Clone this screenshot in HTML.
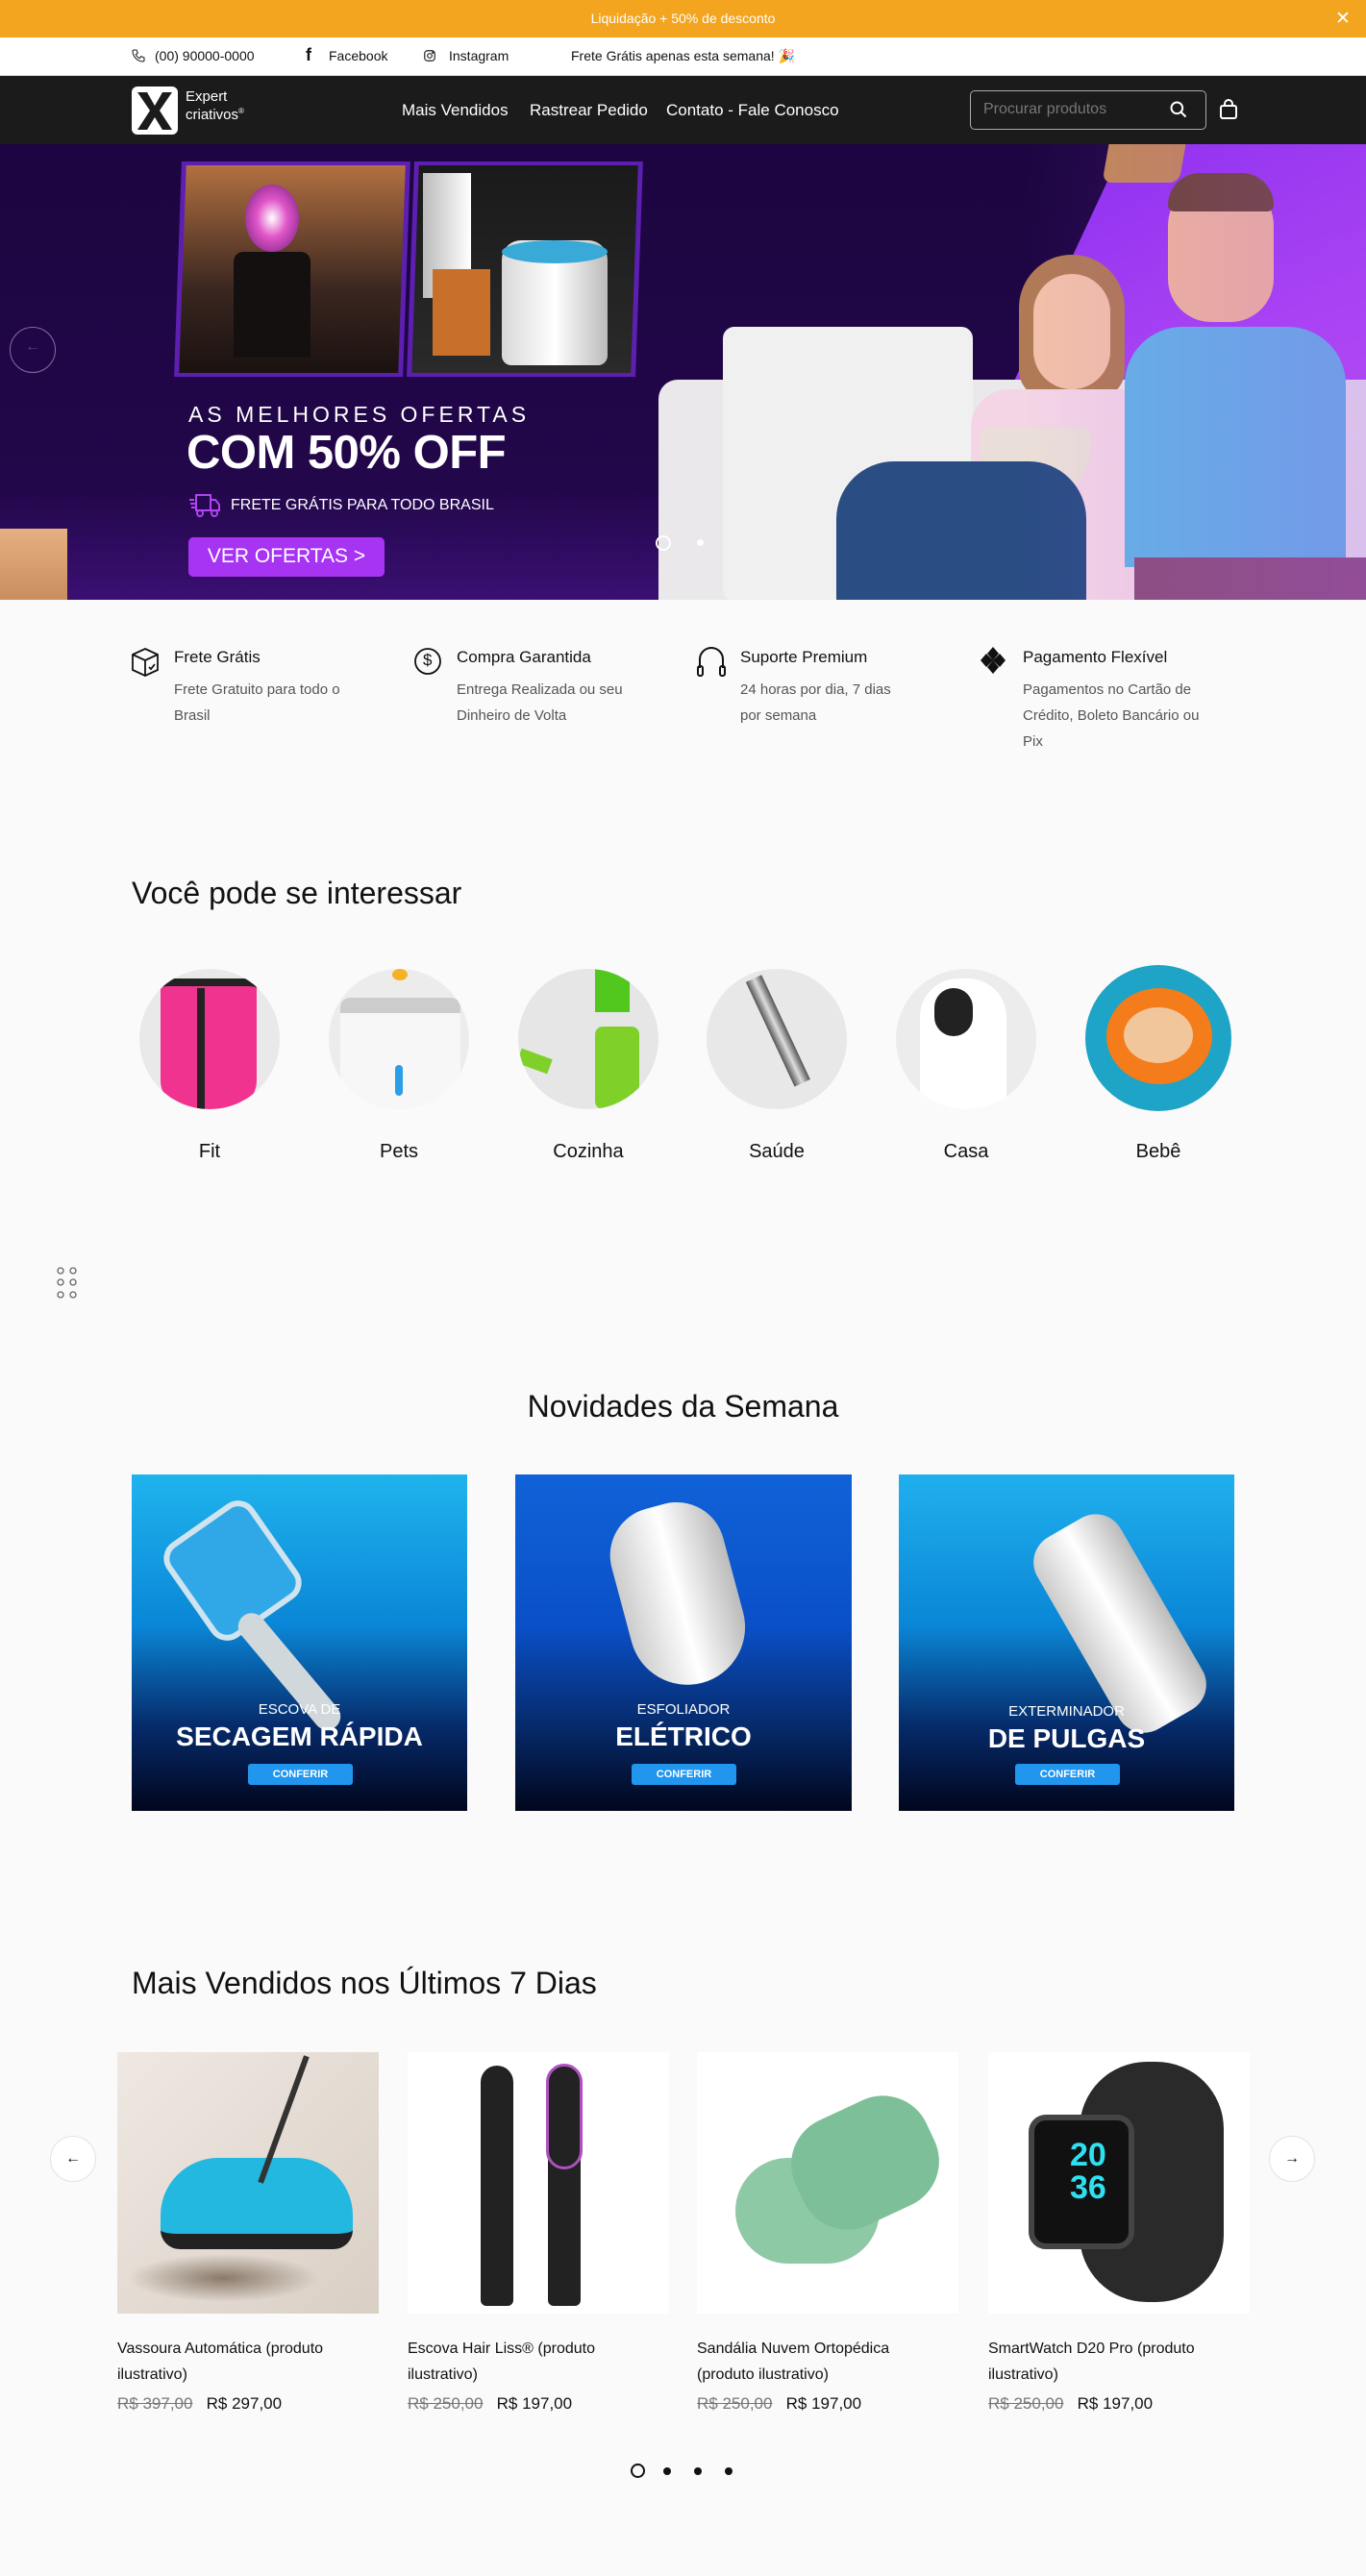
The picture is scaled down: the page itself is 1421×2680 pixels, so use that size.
<!DOCTYPE html>
<html><head><meta charset="utf-8">
<style>
*{margin:0;padding:0;box-sizing:border-box}
body{width:1421px;height:2680px;background:#fafafa;font-family:"Liberation Sans",sans-serif;position:relative;overflow:hidden;color:#111}
.a{position:absolute}
.t{white-space:nowrap}
</style></head><body>
<!-- promo bar -->
<div class="a" style="left:0;top:0;width:1421px;height:39px;background:#f3a51f"></div>
<div class="a t" style="left:0;top:11px;width:1421px;text-align:center;color:#fff;font-size:14px">Liquidação + 50% de desconto</div>
<div class="a t" style="left:1389px;top:8px;color:#fff;font-size:19px">✕</div>
<!-- top bar -->
<div class="a" style="left:0;top:39px;width:1421px;height:40px;background:#fff;border-bottom:1px solid #ddd"></div>
<svg class="a" style="left:136px;top:50px" width="16" height="16" viewBox="0 0 24 24" fill="none" stroke="#222" stroke-width="1.6"><path d="M5 3h4l2 5-3 2a12 12 0 0 0 6 6l2-3 5 2v4a2 2 0 0 1-2 2A17 17 0 0 1 3 5a2 2 0 0 1 2-2z"/></svg>
<div class="a t" style="left:161px;top:50px;font-size:14px">(00) 90000-0000</div>
<div class="a t" style="left:318px;top:47px;font-size:18px;font-weight:bold">f</div>
<div class="a t" style="left:342px;top:50px;font-size:14px">Facebook</div>
<svg class="a" style="left:440px;top:51px" width="14" height="14" viewBox="0 0 24 24" fill="none" stroke="#222" stroke-width="2"><rect x="3" y="3" width="18" height="18" rx="5"/><circle cx="12" cy="12" r="4"/><circle cx="17.5" cy="6.5" r="1" fill="#222"/></svg>
<div class="a t" style="left:467px;top:50px;font-size:14px">Instagram</div>
<div class="a t" style="left:594px;top:50px;font-size:14px">Frete Grátis apenas esta semana! <span style="color:#e6a">🎉</span></div>
<!-- nav -->
<div class="a" style="left:0;top:79px;width:1421px;height:71px;background:#1b1b1b"></div>
<div class="a" style="left:137px;top:90px;width:48px;height:50px;background:#fff;border-radius:6px"></div>
<svg class="a" style="left:137px;top:90px" width="48" height="50" viewBox="0 0 48 50"><path d="M6 6h10l8 14 8-14h10L29 25l13 20H32l-8-13-8 13H6l13-20z" fill="#1b1b1b"/></svg>
<div class="a" style="left:193px;top:93px;color:#fff;font-size:15px;line-height:15px">Expert<br>criativos<sup style="font-size:8px">®</sup></div>
<div class="a t" style="left:418px;top:105px;color:#fff;font-size:17px">Mais Vendidos</div>
<div class="a t" style="left:551px;top:105px;color:#fff;font-size:17px">Rastrear Pedido</div>
<div class="a t" style="left:693px;top:105px;color:#fff;font-size:17px">Contato - Fale Conosco</div>
<div class="a" style="left:1009px;top:94px;width:246px;height:41px;border:1px solid #aaa;border-radius:5px"></div>
<div class="a t" style="left:1023px;top:105px;color:#777;font-size:16px">Procurar produtos</div>
<svg class="a" style="left:1216px;top:104px" width="20" height="20" viewBox="0 0 24 24" fill="none" stroke="#fff" stroke-width="2.4"><circle cx="10" cy="10" r="7"/><path d="M15 15l6 6"/></svg>
<svg class="a" style="left:1268px;top:103px" width="20" height="22" viewBox="0 0 20 22" fill="none" stroke="#fff" stroke-width="2"><rect x="2" y="7" width="16" height="13" rx="2"/><path d="M6 7V5a4 4 0 0 1 8 0v2"/></svg>
<!-- hero -->
<div class="a" style="left:0;top:150px;width:1421px;height:474px;background:linear-gradient(180deg,#1c0540 0%,#22074a 75%,#3a0f72 100%);overflow:hidden">
  <div class="a" style="left:1030px;top:0;width:400px;height:474px;background:linear-gradient(160deg,#8a2ef0,#b046f5 60%,#9b3be0);clip-path:polygon(140px 0,400px 0,400px 474px,0 474px,0 300px)"></div>
  <div class="a" style="left:1150px;top:0;width:80px;height:40px;background:#c28a55;border-radius:0 0 10px 10px;transform:skewX(-10deg)"></div>
  <div class="a" style="left:0;top:400px;width:70px;height:74px;background:linear-gradient(#e6b080,#c98d60)"></div>
  <!-- couch -->
  <div class="a" style="left:685px;top:245px;width:736px;height:230px;background:#eae8ea;border-radius:20px 0 0 0"></div>
  <div class="a" style="left:752px;top:190px;width:260px;height:285px;background:#f1f0f1;border-radius:12px"></div>
  <!-- woman -->
  <div class="a" style="left:1060px;top:115px;width:110px;height:150px;background:#b07a55;border-radius:55px 55px 30px 30px"></div>
  <div class="a" style="left:1075px;top:135px;width:80px;height:120px;background:#f2c1a8;border-radius:40px"></div>
  <div class="a" style="left:1010px;top:255px;width:210px;height:219px;background:#f3d5e6;border-radius:40px 40px 0 0"></div>
  <div class="a" style="left:1020px;top:295px;width:115px;height:75px;background:#eadfd8;border-radius:10px 10px 55px 55px"></div>
  <div class="a" style="left:870px;top:330px;width:260px;height:145px;background:#2a4d84;border-radius:60px 60px 0 0"></div>
  <!-- man -->
  <div class="a" style="left:1215px;top:35px;width:110px;height:150px;background:#f0b899;border-radius:50px 50px 45px 45px"></div>
  <div class="a" style="left:1215px;top:30px;width:110px;height:40px;background:#6a4632;border-radius:50px 50px 10px 10px"></div>
  <div class="a" style="left:1170px;top:190px;width:230px;height:250px;background:#62b4e6;border-radius:60px 60px 0 0"></div>
  <div class="a" style="left:1180px;top:430px;width:241px;height:44px;background:#8a4f7a"></div>
  <div class="a" style="left:0;top:0;width:1421px;height:474px;background:linear-gradient(90deg,transparent 75%,rgba(170,70,240,.25))"></div>
  <!-- thumbnails -->
  <div class="a" style="left:185px;top:18px;width:238px;height:224px;background:#5d1fb0;transform:skewX(-2deg)"></div>
  <div class="a" style="left:190px;top:22px;width:228px;height:216px;background:linear-gradient(180deg,#b27040,#3a2620 60%,#1a1210);transform:skewX(-2deg)"></div>
  <div class="a" style="left:255px;top:42px;width:56px;height:70px;border-radius:50%;background:radial-gradient(#fff,#e055c8 40%,#6a1a7a)"></div>
  <div class="a" style="left:243px;top:112px;width:80px;height:110px;background:#151010;border-radius:10px 10px 0 0"></div>
  <div class="a" style="left:427px;top:18px;width:238px;height:224px;background:#5d1fb0;transform:skewX(-2deg)"></div>
  <div class="a" style="left:432px;top:22px;width:228px;height:216px;background:linear-gradient(180deg,#1a1a1a,#2a2a2a);transform:skewX(-2deg)"></div>
  <div class="a" style="left:522px;top:100px;width:110px;height:130px;background:linear-gradient(90deg,#d8d8d8,#fff,#bbb);border-radius:20px 20px 10px 10px"></div>
  <div class="a" style="left:522px;top:100px;width:110px;height:24px;background:#39a9d8;border-radius:50%"></div>
  <div class="a" style="left:440px;top:30px;width:50px;height:130px;background:linear-gradient(90deg,#bbb,#fff)"></div>
  <div class="a" style="left:450px;top:130px;width:60px;height:90px;background:#c8702a"></div>
  <!-- left arrow -->
  <div class="a" style="left:10px;top:190px;width:48px;height:48px;border:1px solid #8a6aa0;border-radius:50%"></div>
  <div class="a t" style="left:26px;top:202px;color:#5a3d80;font-size:16px">←</div>
  <!-- text -->
  <div class="a t" style="left:196px;top:268px;color:#fff;font-size:23px;letter-spacing:4px">AS MELHORES OFERTAS</div>
  <div class="a t" style="left:194px;top:293px;color:#fff;font-size:49px;font-weight:bold;letter-spacing:-0.5px">COM 50% OFF</div>
  <svg class="a" style="left:196px;top:362px" width="34" height="28" viewBox="0 0 34 28" fill="none" stroke="#b044f0" stroke-width="2"><rect x="8" y="3" width="15" height="16"/><path d="M23 8h5l4 5v6h-9z"/><circle cx="12" cy="22" r="3"/><circle cx="27" cy="22" r="3"/><path d="M1 8h5M2 12h5M3 16h4"/></svg>
  <div class="a t" style="left:240px;top:367px;color:#fff;font-size:16px">FRETE GRÁTIS PARA TODO BRASIL</div>
  <div class="a" style="left:196px;top:409px;width:204px;height:41px;background:#a634f2;border-radius:5px"></div>
  <div class="a t" style="left:196px;top:417px;width:204px;text-align:center;color:#fff;font-size:21px">VER OFERTAS &gt;</div>
  <div class="a" style="left:682px;top:407px;width:16px;height:16px;border:2px solid #fff;border-radius:50%"></div>
  <div class="a" style="left:725px;top:411px;width:7px;height:7px;background:#fff;border-radius:50%"></div>
</div>
<!-- features -->
<svg class="a" style="left:136px;top:673px" width="30" height="32" viewBox="0 0 30 32" fill="none" stroke="#111" stroke-width="1.8"><path d="M15 2L28 8v16l-13 6-13-6V8z"/><path d="M2 8l13 6 13-6M15 14v16"/><path d="M19 21l2 2 4-5"/></svg>
<div class="a t" style="left:181px;top:674px;font-size:17px">Frete Grátis</div>
<div class="a" style="left:181px;top:704px;font-size:15px;color:#555;line-height:27px;width:205px">Frete Gratuito para todo o Brasil</div>
<svg class="a" style="left:430px;top:673px" width="30" height="30" viewBox="0 0 30 30" fill="none" stroke="#111" stroke-width="1.8"><circle cx="15" cy="15" r="13"/></svg>
<div class="a t" style="left:440px;top:677px;font-size:17px">$</div>
<div class="a t" style="left:475px;top:674px;font-size:17px">Compra Garantida</div>
<div class="a" style="left:475px;top:704px;font-size:15px;color:#555;line-height:27px;width:205px">Entrega Realizada ou seu Dinheiro de Volta</div>
<svg class="a" style="left:724px;top:671px" width="32" height="34" viewBox="0 0 32 34" fill="none" stroke="#111" stroke-width="2"><path d="M4 24V15a12 12 0 0 1 24 0v9"/><rect x="2" y="22" width="5" height="10" rx="2"/><rect x="25" y="22" width="5" height="10" rx="2"/></svg>
<div class="a t" style="left:770px;top:674px;font-size:17px">Suporte Premium</div>
<div class="a" style="left:770px;top:704px;font-size:15px;color:#555;line-height:27px;width:175px">24 horas por dia, 7 dias por semana</div>
<svg class="a" style="left:1020px;top:673px" width="26" height="28" viewBox="0 0 26 28" fill="#111"><path d="M13 0l6 7-6 7-6-7zM6 7l7 7-7 7-6-7zM20 7l6 7-6 7-7-7zM13 14l6 7-6 7-6-7z"/></svg>
<div class="a t" style="left:1064px;top:674px;font-size:17px">Pagamento Flexível</div>
<div class="a" style="left:1064px;top:704px;font-size:15px;color:#555;line-height:27px;width:200px">Pagamentos no Cartão de Crédito, Boleto Bancário ou Pix</div>
<!-- interessar -->
<div class="a t" style="left:137px;top:911px;font-size:32px">Você pode se interessar</div>
<div class="a" style="left:145px;top:1008px;width:146px;height:146px;border-radius:50%;background:#e9e9e9;overflow:hidden"><div class="a" style="left:22px;top:10px;width:100px;height:136px;background:#f0338f;border-radius:10px 10px 30px 30px;border-top:8px solid #222"></div><div class="a" style="left:60px;top:20px;width:8px;height:126px;background:#222"></div></div>
<div class="a" style="left:342px;top:1008px;width:146px;height:146px;border-radius:50%;background:#ececec;overflow:hidden"><div class="a" style="left:12px;top:30px;width:125px;height:116px;background:#f7f7f7;border-radius:10px 10px 40px 40px;border-top:16px solid #ccc"></div><div class="a" style="left:69px;top:100px;width:8px;height:32px;background:#2b9ee8;border-radius:4px"></div><div class="a" style="left:66px;top:0;width:16px;height:12px;background:#f5b324;border-radius:50%"></div></div>
<div class="a" style="left:539px;top:1008px;width:146px;height:146px;border-radius:50%;background:#e6e6e6;overflow:hidden"><div class="a" style="left:80px;top:60px;width:46px;height:86px;background:#7fd12a;border-radius:8px"></div><div class="a" style="left:80px;top:0;width:36px;height:45px;background:#52c81e"></div><div class="a" style="left:0;top:88px;width:34px;height:16px;background:#7fd12a;transform:rotate(20deg)"></div></div>
<div class="a" style="left:735px;top:1008px;width:146px;height:146px;border-radius:50%;background:#e8e8e8;overflow:hidden"><div class="a" style="left:40px;top:10px;width:18px;height:120px;background:linear-gradient(90deg,#555,#ddd,#555);transform:rotate(-25deg);transform-origin:top"></div></div>
<div class="a" style="left:932px;top:1008px;width:146px;height:146px;border-radius:50%;background:#ececec;overflow:hidden"><div class="a" style="left:25px;top:10px;width:90px;height:136px;background:#fff;border-radius:40px 40px 10px 10px"></div><div class="a" style="left:40px;top:20px;width:40px;height:50px;background:#222;border-radius:20px"></div></div>
<div class="a" style="left:1129px;top:1004px;width:152px;height:152px;border-radius:50%;background:#1ea4c6;overflow:hidden"><div class="a" style="left:22px;top:24px;width:110px;height:100px;border-radius:50%;background:#f47c1a"></div><div class="a" style="left:40px;top:44px;width:72px;height:58px;border-radius:50%;background:#f0c69a"></div></div>
<div class="a t" style="left:145px;top:1187px;width:146px;text-align:center;font-size:20px">Fit</div>
<div class="a t" style="left:342px;top:1187px;width:146px;text-align:center;font-size:20px">Pets</div>
<div class="a t" style="left:539px;top:1187px;width:146px;text-align:center;font-size:20px">Cozinha</div>
<div class="a t" style="left:735px;top:1187px;width:146px;text-align:center;font-size:20px">Saúde</div>
<div class="a t" style="left:932px;top:1187px;width:146px;text-align:center;font-size:20px">Casa</div>
<div class="a t" style="left:1129px;top:1187px;width:152px;text-align:center;font-size:20px">Bebê</div>
<svg class="a" style="left:57px;top:1316px" width="26" height="38" viewBox="0 0 26 38" fill="none" stroke="#666" stroke-width="1.3"><circle cx="6" cy="6" r="3"/><circle cx="19" cy="6" r="3"/><circle cx="6" cy="18" r="3"/><circle cx="19" cy="18" r="3"/><circle cx="6" cy="31" r="3"/><circle cx="19" cy="31" r="3"/></svg>
<!-- novidades -->
<div class="a t" style="left:0;top:1445px;width:1421px;text-align:center;font-size:32px">Novidades da Semana</div>
<div class="a" style="left:137px;top:1534px;width:349px;height:350px;background:linear-gradient(180deg,#1fb4ee 0%,#0a86d6 45%,#062a6a 75%,#01061c 100%);overflow:hidden">
 <div class="a" style="left:50px;top:40px;width:110px;height:120px;background:#30a8e8;border:6px solid #cfe4ee;border-radius:20px;transform:rotate(-35deg)"></div>
 <div class="a" style="left:150px;top:130px;width:28px;height:150px;background:#d0d8dc;border-radius:14px;transform:rotate(-40deg)"></div>
</div>
<div class="a" style="left:536px;top:1534px;width:350px;height:350px;background:linear-gradient(180deg,#1062d8 0%,#0a50c8 45%,#062a6a 75%,#01061c 100%);overflow:hidden">
 <div class="a" style="left:110px;top:30px;width:120px;height:190px;background:linear-gradient(90deg,#ccc,#fff,#bbb);border-radius:50px 50px 60px 60px;transform:rotate(-15deg)"></div>
</div>
<div class="a" style="left:935px;top:1534px;width:349px;height:350px;background:linear-gradient(180deg,#20b0ee 0%,#0a86d6 45%,#062a6a 75%,#01061c 100%);overflow:hidden">
 <div class="a" style="left:180px;top:40px;width:100px;height:230px;background:linear-gradient(90deg,#ccc,#fff,#bbb);border-radius:30px;transform:rotate(-30deg)"></div>
</div>
<div class="a t" style="left:137px;top:1770px;width:349px;text-align:center;color:#fff;font-size:15px">ESCOVA DE</div>
<div class="a t" style="left:137px;top:1791px;width:349px;text-align:center;color:#fff;font-size:28px;font-weight:bold">SECAGEM RÁPIDA</div>
<div class="a t" style="left:536px;top:1770px;width:350px;text-align:center;color:#fff;font-size:15px">ESFOLIADOR</div>
<div class="a t" style="left:536px;top:1791px;width:350px;text-align:center;color:#fff;font-size:28px;font-weight:bold">ELÉTRICO</div>
<div class="a t" style="left:935px;top:1772px;width:349px;text-align:center;color:#fff;font-size:15px">EXTERMINADOR</div>
<div class="a t" style="left:935px;top:1793px;width:349px;text-align:center;color:#fff;font-size:28px;font-weight:bold">DE PULGAS</div>
<div class="a" style="left:258px;top:1835px;width:109px;height:22px;background:#2196ee;border-radius:3px;color:#fff;font-size:11px;font-weight:bold;text-align:center;line-height:22px">CONFERIR</div>
<div class="a" style="left:657px;top:1835px;width:109px;height:22px;background:#2196ee;border-radius:3px;color:#fff;font-size:11px;font-weight:bold;text-align:center;line-height:22px">CONFERIR</div>
<div class="a" style="left:1056px;top:1835px;width:109px;height:22px;background:#2196ee;border-radius:3px;color:#fff;font-size:11px;font-weight:bold;text-align:center;line-height:22px">CONFERIR</div>
<!-- mais vendidos -->
<div class="a t" style="left:137px;top:2045px;font-size:32px">Mais Vendidos nos Últimos 7 Dias</div>
<div class="a" style="left:122px;top:2135px;width:272px;height:272px;background:linear-gradient(135deg,#efe8e2,#d9cfc5);overflow:hidden">
 <div class="a" style="left:45px;top:110px;width:200px;height:95px;background:#22b8e0;border-radius:60px 60px 20px 20px;border-bottom:16px solid #222"></div>
 <div class="a" style="left:170px;top:0;width:6px;height:140px;background:#333;transform:rotate(20deg)"></div>
 <div class="a" style="left:10px;top:210px;width:200px;height:50px;background:radial-gradient(#8a7a6a,transparent 70%)"></div>
</div>
<div class="a" style="left:424px;top:2135px;width:272px;height:272px;background:#fff;overflow:hidden">
 <div class="a" style="left:76px;top:14px;width:34px;height:250px;background:#222;border-radius:17px 17px 6px 6px"></div>
 <div class="a" style="left:146px;top:14px;width:34px;height:250px;background:#222;border-radius:17px 17px 6px 6px"></div>
 <div class="a" style="left:144px;top:12px;width:38px;height:110px;border:3px solid #b050c0;border-radius:19px"></div>
</div>
<div class="a" style="left:725px;top:2135px;width:272px;height:272px;background:#fff;overflow:hidden">
 <div class="a" style="left:40px;top:110px;width:150px;height:110px;background:#8ec9a6;border-radius:60px"></div>
 <div class="a" style="left:100px;top:55px;width:150px;height:120px;background:#7cbf98;border-radius:50px;transform:rotate(-25deg)"></div>
</div>
<div class="a" style="left:1028px;top:2135px;width:272px;height:272px;background:#fff;overflow:hidden">
 <div class="a" style="left:95px;top:10px;width:150px;height:250px;background:#2a2a2a;border-radius:70px"></div>
 <div class="a" style="left:42px;top:65px;width:110px;height:140px;background:#111;border:6px solid #444;border-radius:18px"></div>
 <div class="a t" style="left:85px;top:90px;color:#2ee0f0;font-size:34px;font-weight:bold;line-height:34px">20<br>36</div>
</div>
<div class="a" style="left:52px;top:2222px;width:48px;height:48px;border-radius:50%;background:#fff;border:1px solid #e2e2e2;text-align:center;line-height:46px;font-size:16px">←</div>
<div class="a" style="left:1320px;top:2222px;width:48px;height:48px;border-radius:50%;background:#fff;border:1px solid #e2e2e2;text-align:center;line-height:46px;font-size:16px">→</div>
<div class="a" style="left:122px;top:2430px;width:250px;font-size:16px;line-height:27px">Vassoura Automática (produto ilustrativo)</div>
<div class="a" style="left:424px;top:2430px;width:250px;font-size:16px;line-height:27px">Escova Hair Liss® (produto ilustrativo)</div>
<div class="a" style="left:725px;top:2430px;width:230px;font-size:16px;line-height:27px">Sandália Nuvem Ortopédica (produto ilustrativo)</div>
<div class="a" style="left:1028px;top:2430px;width:250px;font-size:16px;line-height:27px">SmartWatch D20 Pro (produto ilustrativo)</div>
<div class="a t" style="left:122px;top:2491px;font-size:17px"><s style="color:#777">R$ 397,00</s>&nbsp;&nbsp; R$ 297,00</div>
<div class="a t" style="left:424px;top:2491px;font-size:17px"><s style="color:#777">R$ 250,00</s>&nbsp;&nbsp; R$ 197,00</div>
<div class="a t" style="left:725px;top:2491px;font-size:17px"><s style="color:#777">R$ 250,00</s>&nbsp;&nbsp; R$ 197,00</div>
<div class="a t" style="left:1028px;top:2491px;font-size:17px"><s style="color:#777">R$ 250,00</s>&nbsp;&nbsp; R$ 197,00</div>
<div class="a" style="left:656px;top:2563px;width:15px;height:15px;border:2px solid #111;border-radius:50%"></div>
<div class="a" style="left:690px;top:2567px;width:8px;height:8px;background:#111;border-radius:50%"></div>
<div class="a" style="left:722px;top:2567px;width:8px;height:8px;background:#111;border-radius:50%"></div>
<div class="a" style="left:754px;top:2567px;width:8px;height:8px;background:#111;border-radius:50%"></div>
</body></html>
